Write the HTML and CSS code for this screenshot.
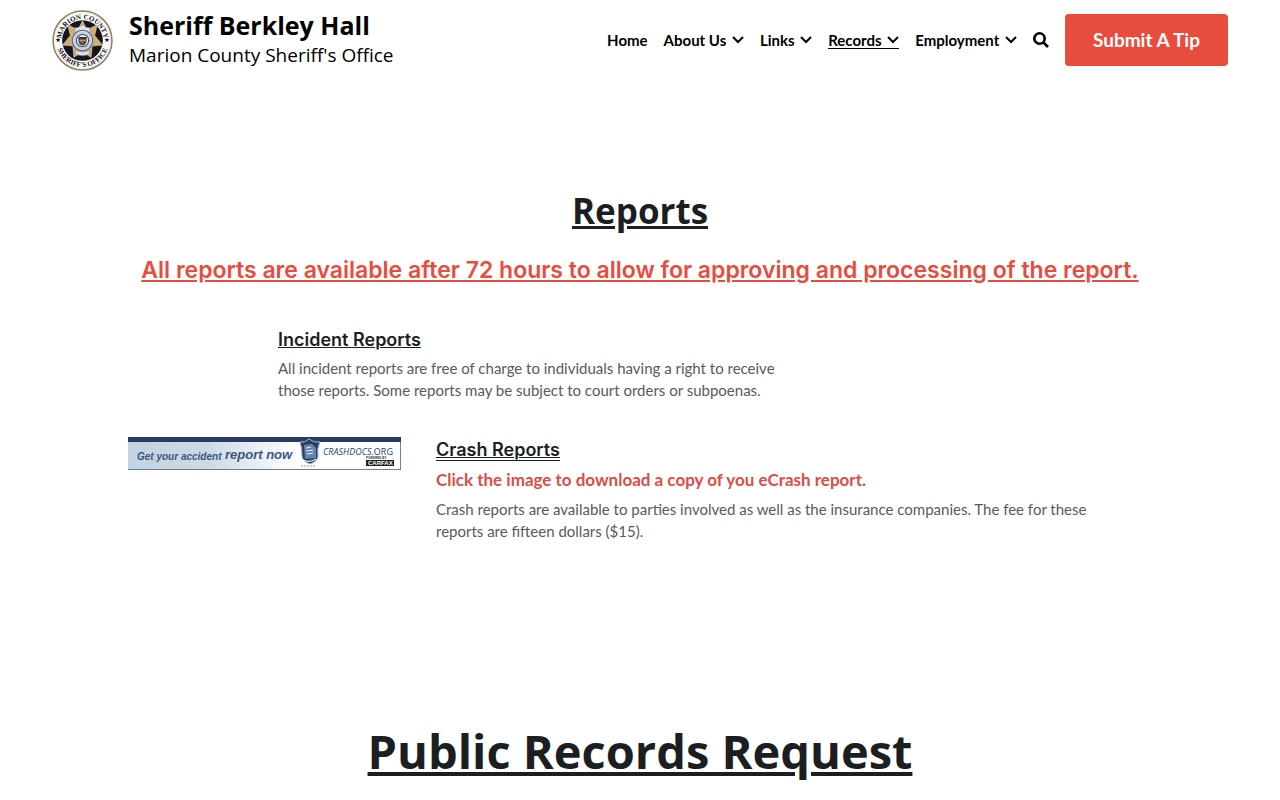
FILE: index.html
```html
<!DOCTYPE html>
<html lang="en">
<head>
    <meta charset="UTF-8">
    <meta name="viewport" content="width=device-width, initial-scale=1">
    <title>Records - Marion County Sheriff's Office</title>
    <link rel="stylesheet" href="styles.css">
</head>
<body>
<header class="header">
    <a class="brand" href="#">
        <svg class="seal" viewBox="0 0 120 120" role="img" aria-label="Marion County Sheriff's Office seal">
            <defs>
                <path id="arc-top" d="M18 60a42 42 0 0 1 84 0"/>
                <path id="arc-bottom" d="M8 60a52 52 0 0 0 104 0"/>
            </defs>
            <circle cx="60" cy="60" r="58" fill="#fff" stroke="#8d806a" stroke-width="3"/>
            <circle cx="60" cy="60" r="55" fill="none" stroke="#d8cfbd" stroke-width="1"/>
            <circle cx="60" cy="60" r="40" fill="#15151a"/>
            <!-- seven point star -->
            <path d="M60 21l9 18 20-10-5 21 15 19-20 2-2 22-17-10-17 10-2-22-20-2 15-19-5-21 20 10z" fill="#d0ad72" stroke="#eee0c0" stroke-width="1"/>
            <path d="M45 35q8 1 15-6 7 7 15 6v9H45z" fill="#dfe3ea" stroke="#69758c"/>
            <circle cx="60" cy="60" r="20" fill="#dce1ea" stroke="#596783" stroke-width="2"/>
            <circle cx="60" cy="60" r="15" fill="none" stroke="#a3aec2" stroke-width="3" stroke-dasharray="2 2"/>
            <circle cx="60" cy="60" r="12" fill="#f5f1e5" stroke="#344869" stroke-width="2"/>
            <path d="M52 53h16v8q-1 7-8 9-7-2-8-9z" fill="#263554"/>
            <path d="M54 58h12v4H54z" fill="#d39b35"/>
            <path d="M55 63h10l-5 6z" fill="#a9473c"/>
            <path d="M46 79q14 7 28 0v7q-14 8-28 0z" fill="#dfe3ea" stroke="#69758c"/>
            <text class="seal-text"><textPath href="#arc-top" startOffset="50%">MARION COUNTY</textPath></text>
            <text class="seal-text"><textPath href="#arc-bottom" startOffset="50%">SHERIFF'S OFFICE</textPath></text>
            <path d="M12 54l1 3h4l-3 2 1 4-3-2-3 2 1-4-3-2h4zM108 54l1 3h4l-3 2 1 4-3-2-3 2 1-4-3-2h4z" fill="#111"/>
        </svg>
        <span class="brand-text">
            <strong>Sheriff Berkley Hall</strong>
            <span>Marion County Sheriff's Office</span>
        </span>
    </a>
    <nav class="nav">
        <a href="#">Home</a>
        <a href="#">About Us <svg class="chevron" viewBox="0 0 12 8"><path d="M1 1l5 5 5-5"/></svg></a>
        <a href="#">Links <svg class="chevron" viewBox="0 0 12 8"><path d="M1 1l5 5 5-5"/></svg></a>
        <a class="active" href="#">Records <svg class="chevron" viewBox="0 0 12 8"><path d="M1 1l5 5 5-5"/></svg></a>
        <a href="#">Employment <svg class="chevron" viewBox="0 0 12 8"><path d="M1 1l5 5 5-5"/></svg></a>
        <button class="search" type="button" aria-label="Search">
            <svg viewBox="0 0 16 16"><circle cx="6.5" cy="6.5" r="5.2"/><path d="M10.5 10.5l4.5 4.5"/></svg>
        </button>
        <a class="tip" href="#">Submit A Tip</a>
    </nav>
</header>

<main>
    <!-- reports -->
    <section class="reports">
        <h2>Reports</h2>
        <h3 class="notice">All reports are available after 72 hours to allow for approving and processing of the report.</h3>

        <div class="incident">
            <h4>Incident Reports</h4>
            <p>All incident reports are free of charge to individuals having a right to receive those reports. Some reports may be subject to court orders or subpoenas.</p>
        </div>

        <div class="crash">
            <a class="banner" href="#">
                <svg viewBox="0 0 273 33" role="img" aria-label="Get your accident report now, crashdocs.org">
                    <defs>
                        <linearGradient id="sky">
                            <stop offset="0" stop-color="#c1d3e1"/>
                            <stop offset=".3" stop-color="#cddae6"/>
                            <stop offset=".62" stop-color="#fff"/>
                        </linearGradient>
                    </defs>
                    <path d="M0 0h273v33H0z" fill="#6d7f96"/>
                    <path d="M0 5h272v27H0z" fill="url(#sky)"/>
                    <path d="M0 0h273v5H0z" fill="#263c67"/>
                    <text class="ad" x="9" y="23">Get your accident</text>
                    <text class="ad ad-big" x="97" y="22">report now</text>
                    <path d="M172 5q5 1 9-3 5 4 11 3-3 6-2 14 0 5-8 8-8-3-8-8 0-8-2-14z" fill="#283f66" stroke="#a7b6c8"/>
                    <path d="M176 8l8-1 4 4v10l-11 1z" fill="#6484a9"/>
                    <path d="M178 11l5-1M178 14l7-1M179 17l6-1M175 23q7 3 13-1" fill="none" stroke="#e9f0f6" stroke-width="1.2"/>
                    <path d="M173 29h14" stroke="#98a2ae" stroke-width="1" stroke-dasharray="2 1"/>
                    <text class="site" x="195" y="18"><tspan font-style="italic">CRASHDOCS</tspan>.ORG</text>
                    <text class="powered" x="238" y="22">POWERED BY</text>
                    <path d="M238 23h28v6h-28z" fill="#222"/>
                    <text class="carfax" x="240" y="28">CARFAX</text>
                </svg>
            </a>
            <div class="crash-text">
                <h4><a href="#">Crash Reports</a></h4>
                <p class="click">Click the image to download a copy of you eCrash report.</p>
                <p>Crash reports are available to parties involved as well as the insurance companies. The fee for these reports are fifteen dollars ($15).</p>
            </div>
        </div>
    </section>

    <!-- public records -->
    <section class="records">
        <h1>Public Records Request</h1>
    </section>
</main>
</body>
</html>
```
FILE: styles.css
```css
* {
    box-sizing: border-box;
}
body {
    margin: 0;
    background: #fff;
    color: #555b61;
    font-family: "Lato", sans-serif;
    font-size: 15px;
    line-height: 22px;
}
h1, h2, h3, h4, p {
    margin: 0;
}
a {
    color: inherit;
    text-decoration: none;
}

/* header */
.header {
    display: flex;
    align-items: center;
    justify-content: space-between;
    height: 80px;
    padding: 0 52px;
    color: #000;
}
.brand {
    display: flex;
    align-items: center;
    gap: 16px;
}
.seal {
    width: 61px;
    height: 61px;
}
.seal-text {
    font: bold 14px "Liberation Serif", serif;
    text-anchor: middle;
    fill: #111;
}
.brand-text {
    display: flex;
    flex-direction: column;
    font-family: "Open Sans", sans-serif;
    font-size: 19px;
    line-height: 30px;
}
.brand-text strong {
    font-size: 25px;
}
.nav {
    display: flex;
    align-items: center;
    gap: 16px;
    font-size: 15px;
    font-weight: bold;
}
.nav .active {
    border-bottom: 1px solid #000;
    line-height: 16px;
}
.chevron {
    width: 12px;
    height: 8px;
    margin-left: 2px;
    vertical-align: 2px;
    fill: none;
    stroke: #000;
    stroke-width: 2;
}
.search {
    display: flex;
    padding: 0;
    border: 0;
    background: none;
}
.search svg {
    width: 16px;
    height: 16px;
    fill: none;
    stroke: #000;
    stroke-width: 2.6;
}
.tip {
    padding: 15px 28px;
    border-radius: 4px;
    background: #e84c3d;
    color: #fff;
    font-size: 19px;
}

/* reports */
.reports {
    max-width: 1024px;
    margin: 0 auto;
    padding: 106px 0 0;
}
h1, h2 {
    color: #1c1f22;
    font-family: "Open Sans", sans-serif;
    text-align: center;
    text-decoration: underline;
}
h2 {
    font-size: 35px;
    line-height: 50px;
}
.notice {
    margin-top: 20px;
    color: #e84c3d;
    font-family: "Inter", sans-serif;
    font-size: 23px;
    font-weight: 600;
    line-height: 28px;
    text-align: center;
    text-decoration: underline;
}
h4 {
    margin-bottom: 5px;
    color: #1c1f22;
    font-family: "Inter", sans-serif;
    font-size: 18px;
    font-weight: 600;
    line-height: 24px;
    text-decoration: underline;
}
.incident {
    max-width: 500px;
    margin: 44px 0 0 150px;
}
.crash {
    display: flex;
    align-items: flex-start;
    gap: 35px;
    margin-top: 36px;
}
.banner {
    flex: none;
    width: 273px;
}
.banner svg {
    display: block;
    width: 100%;
}
.ad {
    font: italic bold 10px "Liberation Sans", sans-serif;
    fill: #3a5584;
}
.ad-big {
    font-size: 13px;
}
.site {
    font: 9px "Open Sans", sans-serif;
    fill: #283f66;
}
.powered {
    font: bold 3px "Liberation Sans", sans-serif;
    fill: #333;
}
.carfax {
    font: bold 6px "Liberation Sans", sans-serif;
    fill: #fff;
}
.crash-text {
    max-width: 660px;
    padding-top: 1px;
}
.crash-text h4 a {
    border-bottom: 1px solid #1c1f22;
}
.click {
    margin-bottom: 5px;
    color: #dc4d45;
    font-size: 17px;
    font-weight: bold;
    line-height: 26px;
}

/* public records */
.records {
    padding: 174px 20px 10px;
}
h1 {
    font-size: 47px;
    line-height: 70px;
}
```
